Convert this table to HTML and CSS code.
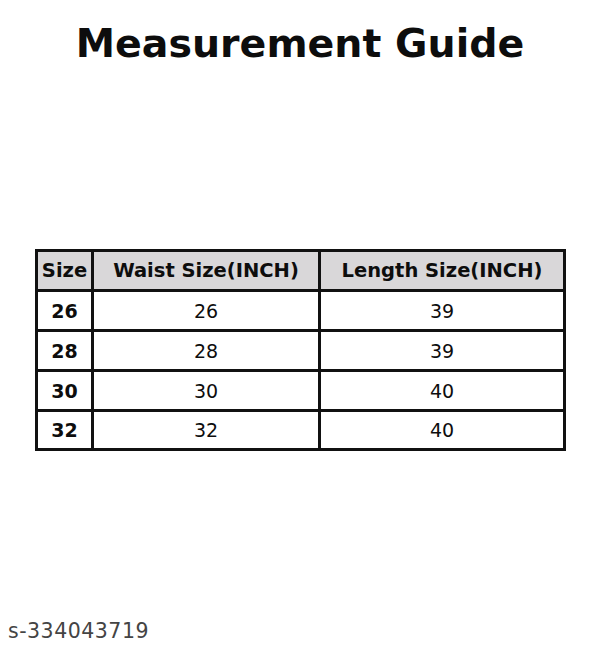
FILE: index.html
```html
<!DOCTYPE html>
<html>
<head>
<meta charset="utf-8">
<link rel="stylesheet" href="styles.css">
</head>
<body>
<div class="page">
  <h1 class="title">Measurement Guide</h1>
  <table class="guide">
    <colgroup>
      <col class="c1"><col class="c2"><col class="c3">
    </colgroup>
    <thead>
      <tr><th>Size</th><th>Waist Size(INCH)</th><th>Length Size(INCH)</th></tr>
    </thead>
    <tbody>
      <tr><td class="sz">26</td><td>26</td><td>39</td></tr>
      <tr><td class="sz">28</td><td>28</td><td>39</td></tr>
      <tr><td class="sz">30</td><td>30</td><td>40</td></tr>
      <tr><td class="sz">32</td><td>32</td><td>40</td></tr>
    </tbody>
  </table>
  <div class="code">s-334043719</div>
</div>
</body>
</html>
```
FILE: styles.css
```css
html, body {
  margin: 0;
  padding: 0;
  background: #ffffff;
}
.page {
  width: 600px;
  height: 647px;
  display: flex;
  flex-direction: column;
  font-family: "DejaVu Sans", sans-serif;
  color: #0d0d0d;
}
.title {
  margin: 20px 0 0 0;
  text-align: center;
  font-size: 39.5px;
  font-weight: bold;
  line-height: 46px;
}
.guide {
  margin: 183px 0 0 35px;
  width: 528px;
  border-collapse: collapse;
  table-layout: fixed;
}
.c1 { width: 56px; }
.c2 { width: 227px; }
.c3 { width: 245px; }
.guide th, .guide td {
  border: 3px solid #111;
  height: 37px;
  padding: 0;
  text-align: center;
  vertical-align: middle;
  font-size: 19px;
}
.guide tbody tr:last-child td {
  height: 36px;
}
.guide th {
  background: #d9d7d9;
  font-weight: bold;
  font-size: 19.5px;
}
.guide td.sz {
  font-weight: bold;
}
.code {
  margin: 168px 0 0 8px;
  font-size: 20.5px;
  color: #444;
  letter-spacing: 0.5px;
}
```
